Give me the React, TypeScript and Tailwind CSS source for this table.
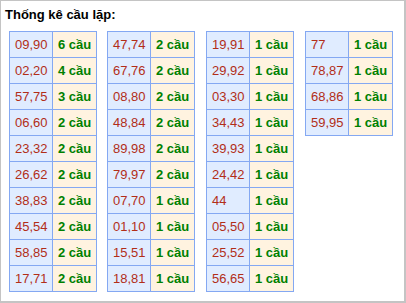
import React from "react";

type Row = [string, number];

const tables: Row[][] = [
  [
    ["09,90", 6],
    ["02,20", 4],
    ["57,75", 3],
    ["06,60", 2],
    ["23,32", 2],
    ["26,62", 2],
    ["38,83", 2],
    ["45,54", 2],
    ["58,85", 2],
    ["17,71", 2],
  ],
  [
    ["47,74", 2],
    ["67,76", 2],
    ["08,80", 2],
    ["48,84", 2],
    ["89,98", 2],
    ["79,97", 2],
    ["07,70", 1],
    ["01,10", 1],
    ["15,51", 1],
    ["18,81", 1],
  ],
  [
    ["19,91", 1],
    ["29,92", 1],
    ["03,30", 1],
    ["34,43", 1],
    ["39,93", 1],
    ["24,42", 1],
    ["44", 1],
    ["05,50", 1],
    ["25,52", 1],
    ["56,65", 1],
  ],
  [
    ["77", 1],
    ["78,87", 1],
    ["68,86", 1],
    ["59,95", 1],
  ],
];

const margins = ["", "ml-[10px]", "ml-[11px]", "ml-[11px]"];

export default function App() {
  return (
    <div
      className="w-[406px] h-[303px] bg-white border-l border-t border-r-2 border-b-2 border-[#c4c4c4] box-border"
      style={{ fontFamily: '"Liberation Sans", Arial, sans-serif' }}
    >
      <div className="pt-[6px] pl-[4px] text-[13px] leading-[15px] font-bold text-black">
        Thống kê cầu lặp:
      </div>
      <div className="flex items-start mt-[9px] ml-[8px]">
        {tables.map((rows, ti) => (
          <div
            key={ti}
            className={`w-[88px] border-l border-t border-[#84a8f2] ${margins[ti]}`}
          >
            {rows.map(([num, c], ri) => (
              <div key={ri} className="flex h-[26px]">
                <div className="w-[43px] border-r border-b border-[#84a8f2] bg-[#e0ecff] flex items-center pl-[5px] text-[13px] text-[#b22e18]">
                  {num}
                </div>
                <div className="w-[44px] border-r border-b border-[#84a8f2] bg-[#fff3e0] flex items-center pl-[5px] text-[13px] font-bold text-[#008000] whitespace-nowrap">
                  {c} cầu
                </div>
              </div>
            ))}
          </div>
        ))}
      </div>
    </div>
  );
}
